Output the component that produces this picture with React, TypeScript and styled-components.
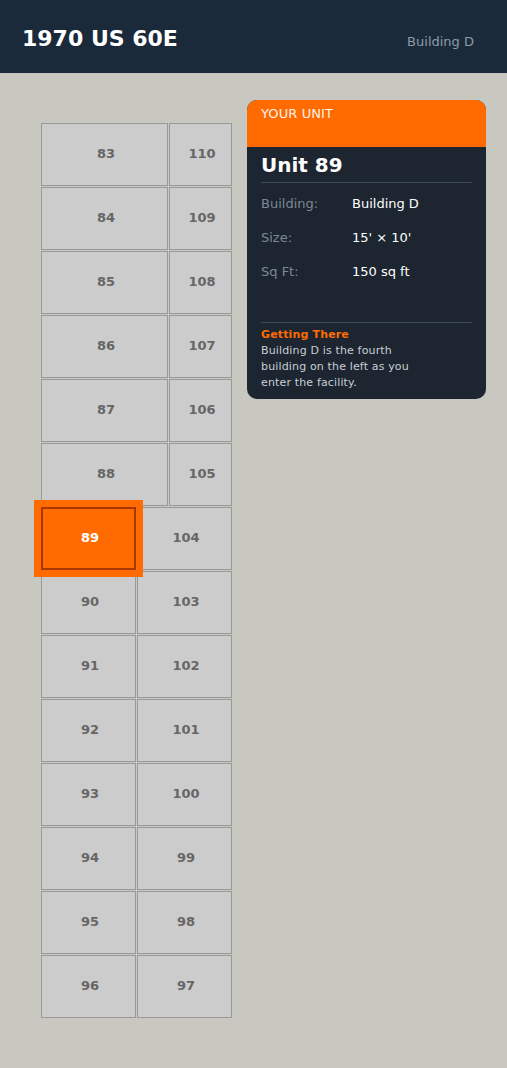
import styled, { createGlobalStyle } from "styled-components";

type RowType = {
  left: number;
  right: number;
  wide: boolean;
};

const ROWS: Array<RowType> = [
  { left: 83, right: 110, wide: true },
  { left: 84, right: 109, wide: true },
  { left: 85, right: 108, wide: true },
  { left: 86, right: 107, wide: true },
  { left: 87, right: 106, wide: true },
  { left: 88, right: 105, wide: true },
  { left: 89, right: 104, wide: false },
  { left: 90, right: 103, wide: false },
  { left: 91, right: 102, wide: false },
  { left: 92, right: 101, wide: false },
  { left: 93, right: 100, wide: false },
  { left: 94, right: 99, wide: false },
  { left: 95, right: 98, wide: false },
  { left: 96, right: 97, wide: false },
];

const SELECTED = 89;

const DETAILS = [
  { label: "Building:", value: "Building D" },
  { label: "Size:", value: "15' × 10'" },
  { label: "Sq Ft:", value: "150 sq ft" },
];

function App() {
  return (
    <>
      <GlobalStyle />
      <SHeader>
        <STitle>1970 US 60E</STitle>
        <SSubtitle>Building D</SSubtitle>
      </SHeader>
      <SMain>
        <SMap>
          {ROWS.map((row) => (
            <SRow key={row.left}>
              <SCell $width={row.wide ? 127 : 95} $active={row.left === SELECTED}>
                {row.left}
              </SCell>
              <SCell $width={row.wide ? 63 : 95} $active={row.right === SELECTED}>
                {row.right}
              </SCell>
            </SRow>
          ))}
        </SMap>
        <SCard>
          <SCardTop>YOUR UNIT</SCardTop>
          <SCardBody>
            <SUnitName>Unit {SELECTED}</SUnitName>
            <SDetails>
              {DETAILS.map((d) => (
                <SDetailRow key={d.label}>
                  <SLabel>{d.label}</SLabel>
                  <SValue>{d.value}</SValue>
                </SDetailRow>
              ))}
            </SDetails>
            <SDirections>
              <SDirTitle>Getting There</SDirTitle>
              <SDirText>
                Building D is the fourth building on the left as you enter the facility.
              </SDirText>
            </SDirections>
          </SCardBody>
        </SCard>
      </SMain>
    </>
  );
}

const GlobalStyle = createGlobalStyle`
  body {
    margin: 0;
    background: #c8c8c0;
    font-family: "DejaVu Sans", sans-serif;
  }
`;

const SHeader = styled.header`
  height: 73px;
  box-sizing: border-box;
  background: #1b2a3b;
  display: flex;
  align-items: baseline;
  justify-content: space-between;
  padding: 26px 33px 0 22px;
`;

const STitle = styled.h1`
  margin: 0;
  font-size: 22px;
  font-weight: bold;
  color: #ffffff;
`;

const SSubtitle = styled.span`
  font-size: 13px;
  color: #8e9aa8;
`;

const SMain = styled.main`
  display: flex;
  align-items: flex-start;
  gap: 15px;
  padding: 27px 21px 50px 41px;
`;

const SMap = styled.div`
  margin-top: 23px;
  width: 191px;
  display: flex;
  flex-direction: column;
  gap: 1px;
`;

const SRow = styled.div`
  display: flex;
  gap: 1px;
`;

const SCell = styled.div<{ $width: number; $active: boolean }>`
  width: ${(p) => p.$width}px;
  height: 63px;
  box-sizing: border-box;
  display: flex;
  align-items: center;
  justify-content: center;
  padding: 0 0 3px 3px;
  font-size: 13px;
  font-weight: bold;
  background: ${(p) => (p.$active ? "#ff6b00" : "#cccccc")};
  color: ${(p) => (p.$active ? "#ffffff" : "#666666")};
  border: ${(p) => (p.$active ? "2px solid #a83800" : "1px solid #999999")};
  box-shadow: ${(p) => (p.$active ? "0 0 0 7px #ff6b00" : "none")};
  position: relative;
  z-index: ${(p) => (p.$active ? 1 : 0)};
`;

const SCard = styled.aside`
  width: 239px;
  border-radius: 10px;
  overflow: hidden;
  background: #1c2530;
`;

const SCardTop = styled.div`
  height: 47px;
  box-sizing: border-box;
  background: #ff6b00;
  padding: 6px 14px 0;
  font-size: 13px;
  letter-spacing: 0.1px;
  color: #fff3ea;
`;

const SCardBody = styled.div`
  padding: 6px 14px 8px;
`;

const SUnitName = styled.h2`
  margin: 0;
  font-size: 20px;
  font-weight: bold;
  color: #ffffff;
  padding-bottom: 5px;
  border-bottom: 1px solid #3a4858;
`;

const SDetails = styled.div`
  display: flex;
  flex-direction: column;
  gap: 19px;
  padding: 13px 0 43px;
  border-bottom: 1px solid #3a4858;
`;

const SDetailRow = styled.div`
  display: flex;
  font-size: 13px;
`;

const SLabel = styled.span`
  width: 91px;
  color: #7c8896;
`;

const SValue = styled.span`
  color: #ffffff;
`;

const SDirections = styled.div`
  padding-top: 4px;
  font-size: 11px;
  line-height: 16px;
  letter-spacing: 0.15px;
`;

const SDirTitle = styled.div`
  font-weight: bold;
  color: #ff6b00;
`;

const SDirText = styled.p`
  margin: 0;
  max-width: 165px;
  color: #c9ced4;
`;

export default App;
